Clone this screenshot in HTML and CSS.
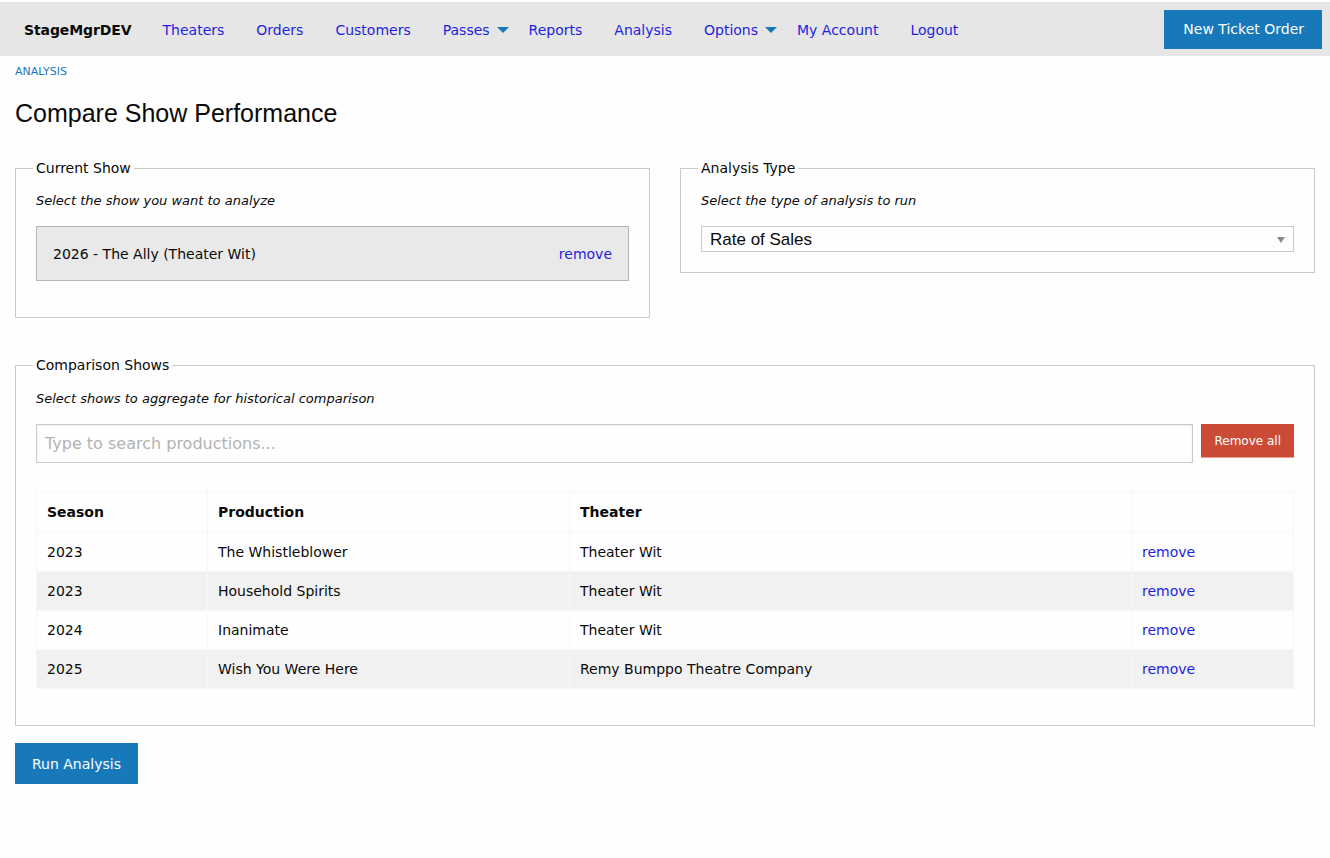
FILE: index.html
```html
<!DOCTYPE html>
<html lang="en">

<head>
    <meta charset="UTF-8">
    <meta name="viewport" content="width=device-width, initial-scale=1.0">
    <title>Compare Show Performance</title>
    <link rel="stylesheet" href="styles.css">
</head>

<body>
    <div class="top-bar">
        <span class="brand">StageMgrDEV</span>
        <ul class="menu">
            <li><a href="#">Theaters</a></li>
            <li><a href="#">Orders</a></li>
            <li><a href="#">Customers</a></li>
            <li><a href="#" class="has-sub">Passes<span class="caret"></span></a></li>
            <li><a href="#">Reports</a></li>
            <li><a href="#">Analysis</a></li>
            <li><a href="#" class="has-sub">Options<span class="caret"></span></a></li>
            <li><a href="#">My Account</a></li>
            <li><a href="#">Logout</a></li>
        </ul>
        <a href="#" class="button order-button">New Ticket Order</a>
    </div>

    <div class="page">
        <nav class="breadcrumbs"><a href="#">Analysis</a></nav>

        <h1>Compare Show Performance</h1>

        <div class="two-col">
            <fieldset>
                <legend>Current Show</legend>
                <p class="hint">Select the show you want to analyze</p>
                <div class="selected-show">
                    <span>2026 - The Ally (Theater Wit)</span>
                    <a href="#">remove</a>
                </div>
            </fieldset>

            <fieldset>
                <legend>Analysis Type</legend>
                <p class="hint">Select the type of analysis to run</p>
                <div class="select-wrap">
                    <select>
                        <option>Rate of Sales</option>
                    </select>
                </div>
            </fieldset>
        </div>

        <fieldset class="comparison">
            <legend>Comparison Shows</legend>
            <p class="hint">Select shows to aggregate for historical comparison</p>
            <div class="search-row">
                <input type="text" placeholder="Type to search productions...">
                <button class="button alert">Remove all</button>
            </div>

            <table>
                <colgroup>
                    <col style="width: 171px">
                    <col style="width: 362px">
                    <col style="width: 562px">
                    <col>
                </colgroup>
                <thead>
                    <tr>
                        <th>Season</th>
                        <th>Production</th>
                        <th>Theater</th>
                        <th></th>
                    </tr>
                </thead>
                <tbody>
                    <tr>
                        <td>2023</td>
                        <td>The Whistleblower</td>
                        <td>Theater Wit</td>
                        <td><a href="#">remove</a></td>
                    </tr>
                    <tr>
                        <td>2023</td>
                        <td>Household Spirits</td>
                        <td>Theater Wit</td>
                        <td><a href="#">remove</a></td>
                    </tr>
                    <tr>
                        <td>2024</td>
                        <td>Inanimate</td>
                        <td>Theater Wit</td>
                        <td><a href="#">remove</a></td>
                    </tr>
                    <tr>
                        <td>2025</td>
                        <td>Wish You Were Here</td>
                        <td>Remy Bumppo Theatre Company</td>
                        <td><a href="#">remove</a></td>
                    </tr>
                </tbody>
            </table>
        </fieldset>

        <button class="button run-button">Run Analysis</button>
    </div>
</body>

</html>
```

FILE: styles.css
```css
body {
    margin: 0;
    background: #fefefe;
    color: #0a0a0a;
    font-family: "DejaVu Sans", Verdana, sans-serif;
    font-size: 14px;
}

a {
    color: #1f1fe0;
    text-decoration: none;
}

.button {
    display: inline-flex;
    align-items: center;
    background-color: #1779ba;
    color: #fefefe;
    border: none;
    font-family: inherit;
    font-size: 14px;
    cursor: pointer;
}

/* top navigation */
.top-bar {
    display: flex;
    align-items: center;
    box-sizing: border-box;
    height: 54px;
    margin-top: 2px;
    padding: 2px 8px 0 24px;
    background: #e6e6e6;
}

.brand {
    font-weight: bold;
    margin-right: 15px;
    letter-spacing: -0.1px;
}

.menu {
    display: flex;
    list-style: none;
    margin: 0;
    padding: 0;
}

.menu a {
    display: flex;
    align-items: center;
    padding: 0 16px;
    line-height: 20px;
}

.menu a.has-sub {
    padding-right: 4px;
}

.caret {
    display: inline-block;
    margin-left: 7px;
    border-left: 6px solid transparent;
    border-right: 6px solid transparent;
    border-top: 6px solid #1779ba;
}

.order-button {
    margin-left: auto;
    margin-top: -2px;
    height: 39px;
    padding: 0 18px 0 19px;
}

/* page body */
.page {
    padding: 0 15px;
}

.breadcrumbs {
    margin-top: 9px;
    font-size: 11px;
    line-height: 14px;
    text-transform: uppercase;
}

.breadcrumbs a {
    color: #1779ba;
}

h1 {
    margin: 19px 0 32px;
    font-family: "Liberation Sans", Arial, sans-serif;
    font-size: 25px;
    font-weight: normal;
    line-height: 30px;
}

.two-col {
    display: grid;
    grid-template-columns: 1fr 1fr;
    gap: 30px;
    align-items: start;
}

fieldset {
    margin: 0;
    min-width: 0;
    padding: 0 20px 20px;
    border: 1px solid #cacaca;
}

legend {
    font-size: 14px;
    line-height: 17px;
    padding: 0 3px;
    margin-left: -3px;
}

.hint {
    margin: 15px 0 16px;
    font-size: 13px;
    font-style: italic;
    line-height: 18px;
}

.selected-show {
    display: flex;
    justify-content: space-between;
    align-items: center;
    height: 53px;
    padding: 0 16px;
    margin-bottom: 16px;
    background: #e9e9e9;
    border: 1px solid #b5b5b5;
}

.select-wrap {
    position: relative;
}

.select-wrap select {
    display: block;
    width: 100%;
    height: 26px;
    padding: 0 8px;
    border: 1px solid #cacaca;
    border-radius: 0;
    background: #fefefe;
    color: #0a0a0a;
    font-family: "Liberation Sans", Arial, sans-serif;
    font-size: 17px;
    appearance: none;
}

.select-wrap::after {
    content: "";
    position: absolute;
    right: 9px;
    top: 11px;
    border-left: 4px solid transparent;
    border-right: 4px solid transparent;
    border-top: 6px solid #8a8a8a;
}

.comparison {
    margin-top: 39px;
}

.comparison .hint {
    margin-top: 16px;
}

.search-row {
    display: flex;
    gap: 8px;
    align-items: flex-start;
}

.search-row input {
    flex: 1;
    height: 39px;
    box-sizing: border-box;
    padding: 0 8px;
    border: 1px solid #cacaca;
    background: #fefefe;
    box-shadow: inset 0 1px 2px rgba(10, 10, 10, 0.08);
    font-family: inherit;
    font-size: 16px;
}

.search-row input::placeholder {
    color: #b3b3b3;
}

.button.alert {
    height: 34px;
    padding: 0 13px;
    background-color: #cc4b37;
    font-size: 12px;
    border-bottom: 1px solid #e6a093;
}

table {
    width: 100%;
    margin: 28px 0 16px;
    border-collapse: collapse;
    table-layout: fixed;
    border: 1px solid #f3f3f3;
}

th,
td {
    height: 38px;
    padding: 0 10px;
    text-align: left;
    border: 1px solid #f6f6f6;
}

th {
    height: 40px;
    font-weight: bold;
}

tbody tr:nth-child(even) {
    background: #f1f1f1;
}

.run-button {
    margin-top: 17px;
    height: 41px;
    padding: 0 17px;
}
```
